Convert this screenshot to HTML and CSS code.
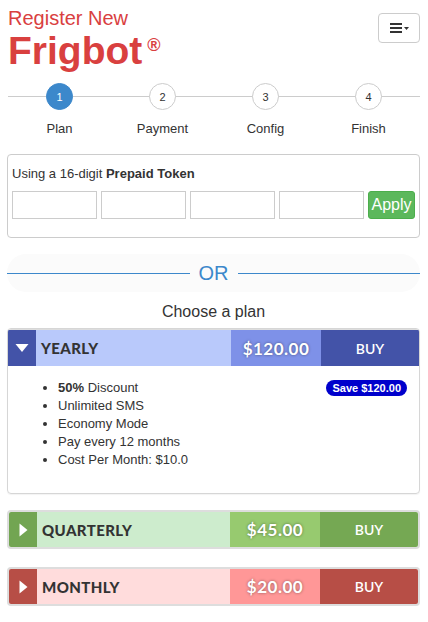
FILE: index.html
```html
<!DOCTYPE html>
<html>
<head>
<meta charset="utf-8">
<link rel="stylesheet" href="styles.css">
</head>
<body>
<div class="page">
  <header class="top">
    <div class="brand">
      <div class="brand-sub">Register New</div>
      <div class="brand-main">Frigbot<sup class="reg">®</sup></div>
    </div>
    <button class="menu-btn">
      <svg width="22" height="12" viewBox="0 0 22 12">
        <rect x="0" y="1" width="12" height="2" fill="#333"/>
        <rect x="0" y="5" width="12" height="2" fill="#333"/>
        <rect x="0" y="9" width="12" height="2" fill="#333"/>
        <path d="M14 5 L19 5 L16.5 8 Z" fill="#333"/>
      </svg>
    </button>
  </header>

  <div class="stepper">
    <div class="step active"><div class="dot">1</div><div class="label">Plan</div></div>
    <div class="step"><div class="dot">2</div><div class="label">Payment</div></div>
    <div class="step"><div class="dot">3</div><div class="label">Config</div></div>
    <div class="step"><div class="dot">4</div><div class="label">Finish</div></div>
  </div>

  <div class="token-panel">
    <div class="token-title">Using a 16-digit <b>Prepaid Token</b></div>
    <div class="token-row">
      <input class="tok" type="text">
      <input class="tok" type="text">
      <input class="tok" type="text">
      <input class="tok" type="text">
      <button class="apply">Apply</button>
    </div>
  </div>

  <div class="or-band">
    <span class="or-line"></span>
    <span class="or-text">OR</span>
    <span class="or-line"></span>
  </div>

  <div class="choose">Choose a plan</div>

  <div class="plan-panel">
    <div class="plan-bar blue">
      <div class="arrow"><svg width="14" height="10" viewBox="0 0 14 10"><path d="M0.5 1 L13.5 1 L7 9 Z" fill="#fff"/></svg></div>
      <div class="name">YEARLY</div>
      <div class="price">$120.00</div>
      <div class="buy">BUY</div>
    </div>
    <div class="plan-body">
      <ul class="features">
        <li><b>50%</b> Discount</li>
        <li>Unlimited SMS</li>
        <li>Economy Mode</li>
        <li>Pay every 12 months</li>
        <li>Cost Per Month: $10.0</li>
      </ul>
      <span class="save">Save $120.00</span>
    </div>
  </div>

  <div class="plan-bar solo green">
    <div class="arrow"><svg width="9" height="14" viewBox="0 0 9 14"><path d="M0.5 0.5 L8.5 7 L0.5 13.5 Z" fill="#fff"/></svg></div>
    <div class="name">QUARTERLY</div>
    <div class="price">$45.00</div>
    <div class="buy">BUY</div>
  </div>

  <div class="plan-bar solo red">
    <div class="arrow"><svg width="9" height="14" viewBox="0 0 9 14"><path d="M0.5 0.5 L8.5 7 L0.5 13.5 Z" fill="#fff"/></svg></div>
    <div class="name">MONTHLY</div>
    <div class="price">$20.00</div>
    <div class="buy">BUY</div>
  </div>
</div>
</body>
</html>
```

FILE: styles.css
```css
* { box-sizing: border-box; }
body {
  margin: 0;
  font-family: "Liberation Sans", Arial, sans-serif;
  color: #333;
  background: #fff;
}
.page {
  padding: 0 8px 0 7px;
}
.top {
  display: flex;
  justify-content: space-between;
  align-items: flex-start;
  height: 80px;
}
.brand {
  padding-left: 1px;
  color: #d9403f;
}
.brand-sub {
  font-size: 20px;
  line-height: 20px;
  padding-top: 8px;
}
.brand-main {
  font-size: 39px;
  font-weight: bold;
  line-height: 42px;
  margin-top: 2px;
}
.reg {
  font-size: 18px;
  font-weight: bold;
  vertical-align: top;
  position: relative;
  top: -6px;
  margin-left: 5px;
}
.menu-btn {
  margin-top: 13px;
  width: 42px;
  height: 30px;
  background: #fff;
  border: 1px solid #ccc;
  border-radius: 4px;
  display: flex;
  align-items: center;
  justify-content: center;
  padding: 0 0 0 4px;
}

.stepper {
  position: relative;
  display: grid;
  grid-template-columns: repeat(4, 1fr);
  margin-top: 3px;
  margin-left: 1px;
}
.stepper::before {
  content: "";
  position: absolute;
  left: 0;
  right: 0;
  top: 13px;
  height: 1px;
  background: #ccc;
}
.step {
  display: flex;
  flex-direction: column;
  align-items: center;
  position: relative;
}
.dot {
  width: 27px;
  height: 27px;
  border-radius: 50%;
  border: 1px solid #ccc;
  background: #fff;
  font-size: 11px;
  display: flex;
  align-items: center;
  justify-content: center;
  color: #333;
}
.step.active .dot {
  background: #3c88cb;
  border-color: #3c88cb;
  color: #fff;
}
.label {
  font-size: 13px;
  margin-top: 11px;
  line-height: 15px;
}

.token-panel {
  margin-top: 18px;
  border: 1px solid #ccc;
  border-radius: 4px;
  padding: 11px 4px 18px 4px;
  height: 84px;
}
.token-title {
  font-size: 13px;
  line-height: 15px;
}
.token-row {
  display: flex;
  gap: 4px;
  margin-top: 10px;
}
.tok {
  width: 85px;
  height: 28px;
  border: 1px solid #ccc;
  margin: 0;
  padding: 0;
  background: #fff;
}
.apply {
  width: 48px;
  height: 28px;
  background: #5cb85c;
  border: 1px solid #4cae4c;
  border-radius: 3px;
  color: #fff;
  font-family: "Liberation Sans", Arial, sans-serif;
  font-size: 16px;
  padding: 0;
}

.or-band {
  margin-top: 16px;
  height: 38px;
  background: #fbfbfb;
  border-radius: 19px;
  display: flex;
  align-items: center;
}
.or-line {
  flex: 1;
  height: 0;
  border-top: 1px solid #3c88cb;
}
.or-text {
  color: #3c88cb;
  font-size: 20px;
  line-height: 24px;
  width: 48px;
  text-align: center;
}

.choose {
  text-align: center;
  font-size: 16px;
  line-height: 18px;
  margin-top: 11px;
  color: #333;
}

.plan-panel {
  margin-top: 7px;
  border: 1px solid #d6d6d6;
  border-radius: 4px;
  box-shadow: 0 1px 1px rgba(0,0,0,0.05);
  overflow: hidden;
}
.plan-bar {
  display: flex;
  height: 37px;
  font-family: Lato, "Open Sans", sans-serif;
}
.plan-panel .plan-bar {
  border-top: 1px solid #ddd;
}
.plan-bar.solo {
  border: 2px solid #ddd;
  border-radius: 4px;
  overflow: hidden;
  height: 39px;
}
.arrow {
  width: 28px;
  display: flex;
  align-items: center;
  justify-content: center;
}
.name {
  flex: 1;
  display: flex;
  align-items: center;
  padding-left: 5px;
  font-weight: 900;
  font-size: 15px;
  color: #333;
  letter-spacing: 0.4px;
}
.price {
  width: 90px;
  display: flex;
  align-items: center;
  justify-content: center;
  color: #fff;
  font-weight: bold;
  font-size: 17px;
  text-shadow: 0 0 3px rgba(0,0,0,0.45);
  letter-spacing: 0.5px;
}
.buy {
  width: 98px;
  display: flex;
  align-items: center;
  justify-content: center;
  color: #fff;
  font-size: 14px;
  font-weight: 600;
}
.blue .arrow { background: #4353a8; }
.blue .name { background: #b9c9fb; }
.blue .price { background: #7e91e8; }
.blue .buy { background: #4353a8; }

.green .arrow { background: #72a552; }
.green .name { background: #cdeccd; }
.green .price { background: #97ca6f; }
.green .buy { background: #75a853; }

.red .arrow { background: #b74e46; }
.red .name { background: #ffdcdc; }
.red .price { background: #ff9797; }
.red .buy { background: #b74e46; }

.plan-body {
  position: relative;
  height: 127px;
  padding-top: 13px;
}
.features {
  margin: 0;
  padding-left: 50px;
  font-size: 13px;
  line-height: 18px;
  list-style: disc;
}
.save {
  position: absolute;
  right: 12px;
  top: 14px;
  background: #0000cc;
  color: #fff;
  font-weight: bold;
  font-size: 11px;
  line-height: 16px;
  padding: 0 6px;
  border-radius: 8px;
}
.plan-bar.green { margin-top: 16px; }
.plan-bar.red { margin-top: 18px; }
```
